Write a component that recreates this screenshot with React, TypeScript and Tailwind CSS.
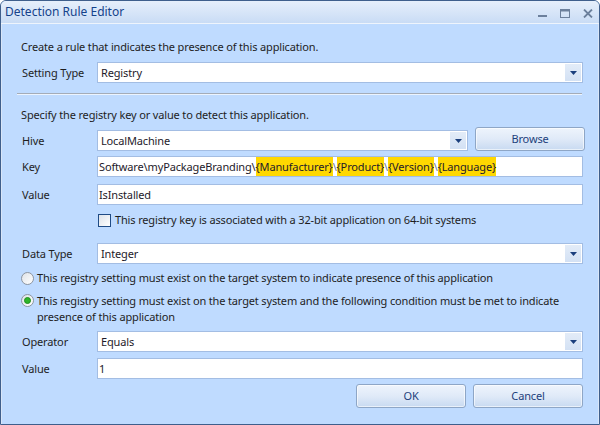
import React from 'react';

const font = { fontFamily: '"Noto Sans", "Open Sans", sans-serif' };

const DropArrow: React.FC = () => (
  <div className="h-full w-[16px] flex items-center justify-center bg-gradient-to-b from-[#e3ecf8] to-[#d3e1f4]">
    <svg width="7" height="4" viewBox="0 0 7 4">
      <path d="M0 0 H7 L3.5 4 Z" fill="#1b3f7d" />
    </svg>
  </div>
);

const Select: React.FC<{ value: string; className?: string }> = ({ value, className = '' }) => (
  <div className={`h-[21px] flex items-center bg-white border border-[#a3bde3] ${className}`}>
    <span className="flex-1 pl-[3px] text-[#1e1a2a] truncate">{value}</span>
    <div className="h-full py-[1px] pr-[1px]">
      <DropArrow />
    </div>
  </div>
);

const TextBox: React.FC<{ children: React.ReactNode }> = ({ children }) => (
  <div className="flex-1 h-[21px] flex items-center bg-white border border-[#a3bde3] pl-[1px] text-[#1e1a2a] whitespace-nowrap">
    {children}
  </div>
);

const Btn: React.FC<{ label: string }> = ({ label }) => (
  <button className="w-[110px] h-[24px] rounded-[3px] border border-[#8ea6c6] bg-gradient-to-b from-[#eef4fc] via-[#e0eaf8] to-[#c8daf1] text-[#1d3f7c] shadow-[inset_0_0_0_1px_rgba(255,255,255,0.6)]">
    {label}
  </button>
);

const Row: React.FC<{ label: string; children: React.ReactNode; className?: string }> = ({ label, children, className = '' }) => (
  <div className={`flex items-center ${className}`}>
    <span className="w-[80px] pl-[5px] text-[#1e1e1e]">{label}</span>
    {children}
  </div>
);

const Hl: React.FC<{ children: React.ReactNode }> = ({ children }) => (
  <span className="bg-[#ffd800] h-[19px] leading-[19px] inline-block">{children}</span>
);

const Radio: React.FC<{ checked?: boolean }> = ({ checked }) => (
  <span className="w-[13px] h-[13px] rounded-full border border-[#8d95a0] bg-gradient-to-br from-[#dfe3e8] to-[#ffffff] flex items-center justify-center shrink-0">
    {checked && <span className="w-[7px] h-[7px] rounded-full bg-[#2fb52a] border border-[#1f8f1d]" />}
  </span>
);

export default function App() {
  return (
    <div className="w-[600px] h-[425px] text-[11px] leading-[16px] tracking-[-0.15px]" style={font}>
      <div className="w-full h-full rounded-t-[6px] border border-[#3f5f8c] bg-[#bfdbff] flex flex-col overflow-hidden">
        <div className="h-[23px] flex items-center justify-between bg-gradient-to-b from-[#e6effb] to-[#c9dcf5] border-b border-[#eef4fc] shrink-0">
          <span className="pl-[4px] text-[12px] tracking-normal text-[#15428b]">Detection Rule Editor</span>
          <div className="flex items-center gap-[13px] pr-[6px] pt-[3px]">
            <svg width="9" height="9" viewBox="0 0 9 9">
              <rect x="0" y="6" width="9" height="2" fill="#6c809c" />
            </svg>
            <svg width="10" height="9" viewBox="0 0 10 9">
              <rect x="0.5" y="0.5" width="9" height="8" fill="none" stroke="#6c809c" />
              <rect x="0" y="0" width="10" height="2.5" fill="#6c809c" />
            </svg>
            <svg width="10" height="9" viewBox="0 0 10 9">
              <path d="M1 0.5 L9 8.5 M9 0.5 L1 8.5" stroke="#6c809c" strokeWidth="1.8" />
            </svg>
          </div>
        </div>

        <div className="flex-1 flex flex-col pl-[15px] pr-[15px] border-x border-[#d9e6f8]">
          <div className="mt-[15px] pl-[4px] text-[#1e1e1e]">Create a rule that indicates the presence of this application.</div>

          <Row label="Setting Type" className="mt-[7px]">
            <Select value="Registry" className="flex-1" />
          </Row>

          <div className="mt-[10px] h-[2px] border-t border-[#a4acb8] bg-white/70 mr-[1px]" />

          <div className="mt-[12px] pl-[4px] text-[#1e1e1e]">Specify the registry key or value to detect this application.</div>

          <div className="mt-[4px] flex items-end">
            <Row label="Hive">
              <Select value="LocalMachine" className="w-[371px]" />
            </Row>
            <div className="ml-[7px]">
              <Btn label="Browse" />
            </div>
          </div>

          <Row label="Key" className="mt-[5px]">
            <TextBox>
              <span>Software\myPackageBranding\</span>
              <Hl>{'{Manufacturer}'}</Hl>
              <span className="text-[#6d7890]">\</span>
              <Hl>{'{Product}'}</Hl>
              <span className="text-[#6d7890]">\</span>
              <Hl>{'{Version}'}</Hl>
              <span className="text-[#6d7890]">\</span>
              <Hl>{'{Language}'}</Hl>
            </TextBox>
          </Row>

          <Row label="Value" className="mt-[7px]">
            <TextBox>IsInstalled</TextBox>
          </Row>

          <div className="mt-[7px] flex items-center pl-[81px] gap-[4px]">
            <span className="w-[13px] h-[13px] border border-[#1f4b85] bg-gradient-to-br from-[#dde2e9] to-[#ffffff] shrink-0" />
            <span className="text-[#1e1e1e]">This registry key is associated with a 32-bit application on 64-bit systems</span>
          </div>

          <Row label="Data Type" className="mt-[15px]">
            <Select value="Integer" className="flex-1" />
          </Row>

          <div className="mt-[6px] flex items-center gap-[3px] pl-[4px]">
            <Radio />
            <span className="text-[#1e1e1e]">This registry setting must exist on the target system to indicate presence of this application</span>
          </div>

          <div className="mt-[7px] flex items-start gap-[3px] pl-[4px]">
            <span className="mt-[1px]"><Radio checked /></span>
            <span className="text-[#1e1e1e]">
              This registry setting must exist on the target system and the following condition must be met to indicate
              <br />
              presence of this application
            </span>
          </div>

          <Row label="Operator" className="mt-[6px]">
            <Select value="Equals" className="flex-1" />
          </Row>

          <Row label="Value" className="mt-[6px]">
            <TextBox>1</TextBox>
          </Row>

          <div className="mt-[5px] flex justify-end gap-[7px]">
            <Btn label="OK" />
            <Btn label="Cancel" />
          </div>
        </div>
      </div>
    </div>
  );
}
